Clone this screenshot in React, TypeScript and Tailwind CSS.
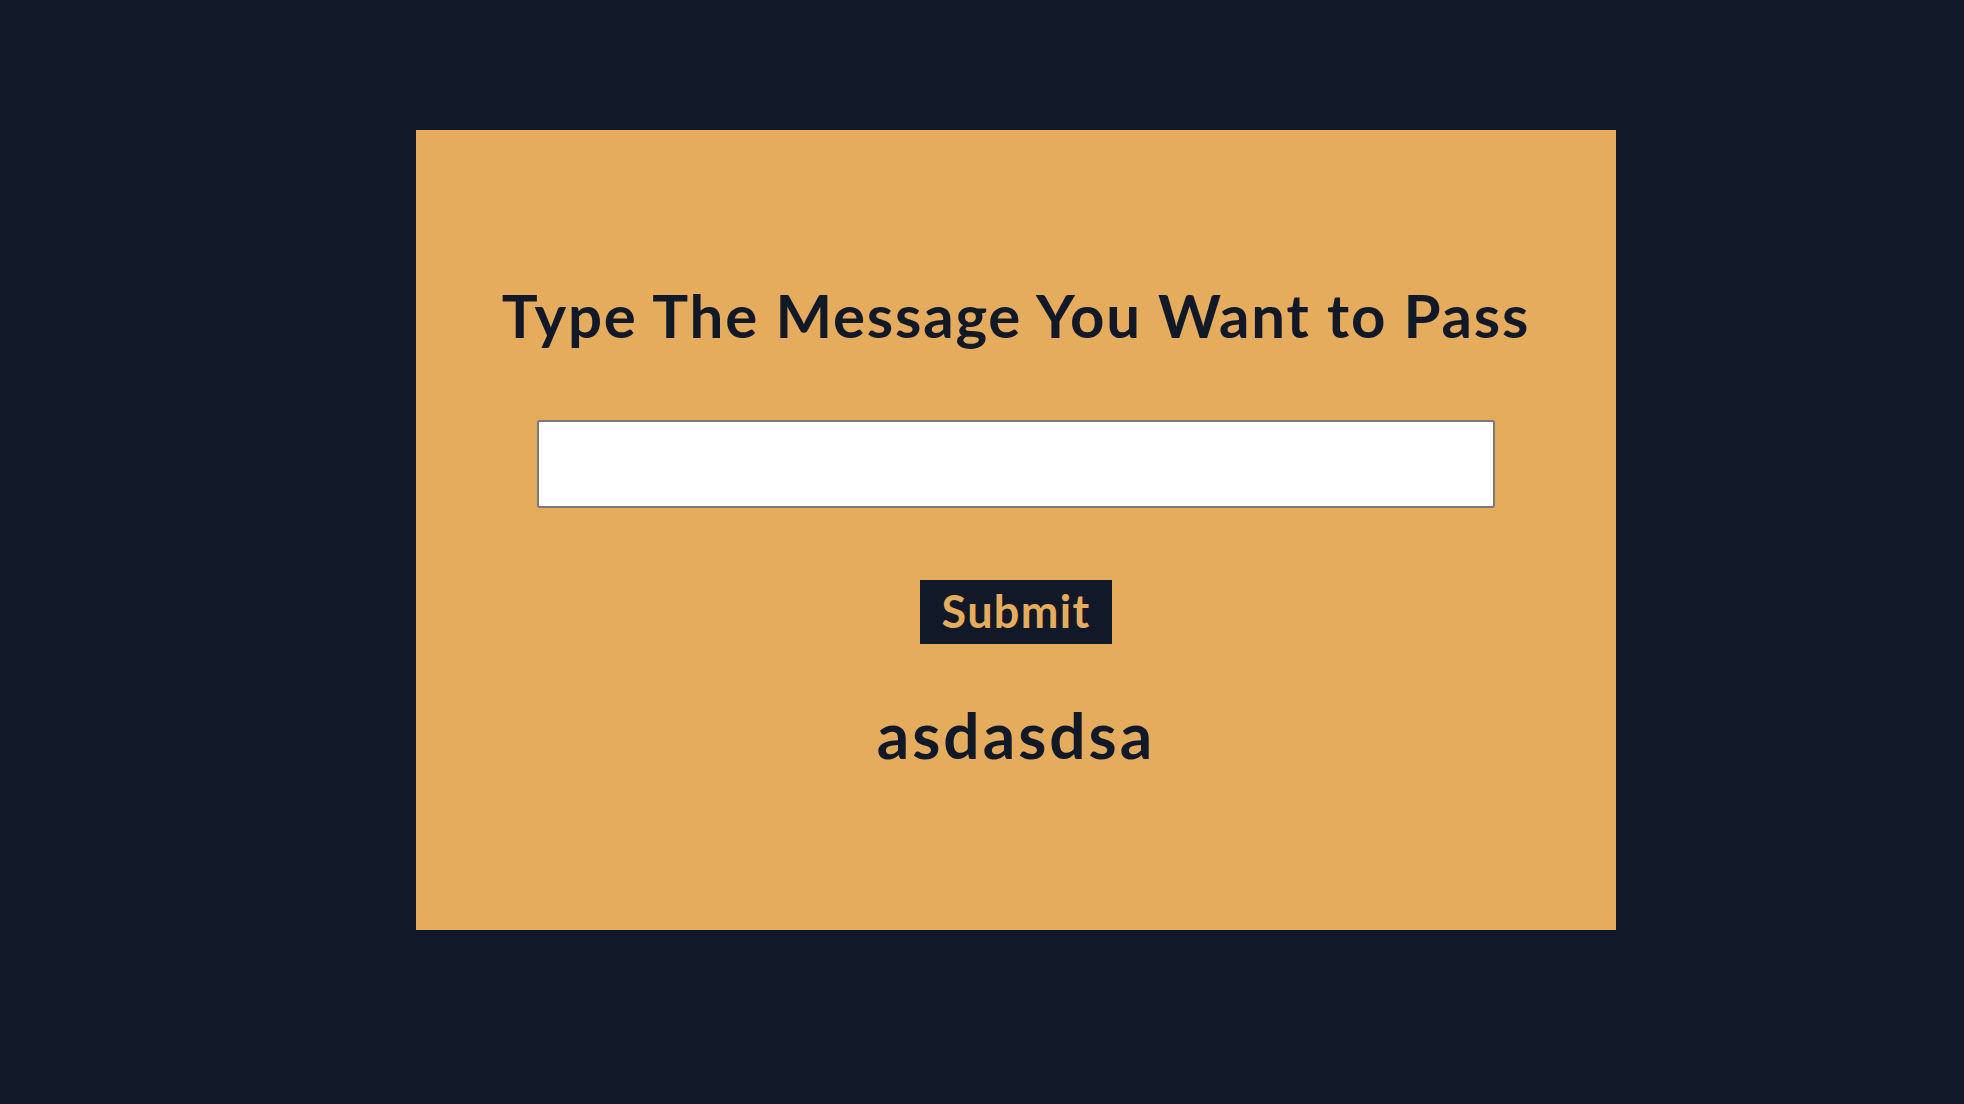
import { useState } from 'react'

export default function App() {
  const [text, setText] = useState('')
  const [message, setMessage] = useState('asdasdsa')

  const handleSubmit = () => {
    if (text.trim()) setMessage(text)
  }

  return (
    <div className="min-h-screen bg-[#111827] pt-[130px] pl-[416px] font-['Lato','Noto_Sans',sans-serif]">
      <div className="w-[1200px] h-[800px] bg-[#e6ac5e] flex flex-col items-center">
        {/* 标题 */}
        <h1 className="mt-[149px] text-[60px] leading-[72px] tracking-[1.8px] font-bold text-[#111827]">
          Type The Message You Want to Pass
        </h1>

        <input
          type="text"
          value={text}
          onChange={(e) => setText(e.target.value)}
          className="mt-[69px] w-[958px] h-[88px] bg-white border-2 border-[#7a7a7a] rounded-[3px] px-3 text-2xl outline-none"
        />

        <button
          onClick={handleSubmit}
          className="mt-[72px] w-[192px] h-[64px] bg-[#111827] text-[#e6ac5e] text-[45px] tracking-[1.3px] font-bold flex items-center justify-center"
        >
          Submit
        </button>

        {/* 结果 */}
        <h2 className="mt-[53px] text-[64px] leading-[76px] tracking-[3px] font-bold text-[#111827]">{message}</h2>
      </div>
    </div>
  )
}
